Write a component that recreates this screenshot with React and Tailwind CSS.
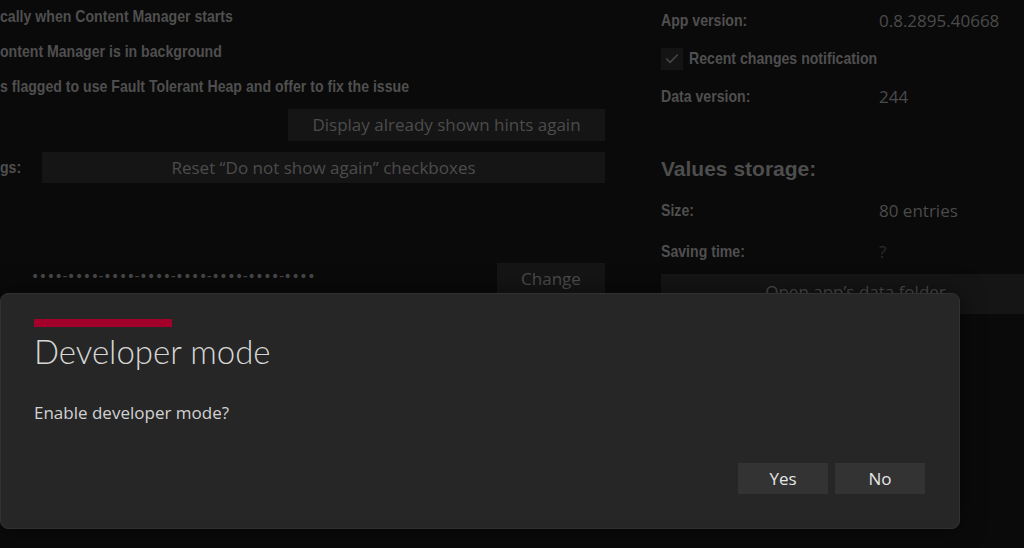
import { Check } from "lucide-react";

const regular = "font-['Open_Sans',sans-serif]";

// Bold condensed label text; no narrow face is installed, so squeeze Liberation Sans
function Label({ children, className = "" }) {
  return (
    <div className={`h-[20px] whitespace-nowrap ${className}`}>
      <span className="block w-max origin-left scale-x-[0.83] font-['Liberation_Sans',sans-serif] text-[17px] font-bold leading-[20px] text-[#4f4f4f]">
        {children}
      </span>
    </div>
  );
}

function DimButton({ children, className = "" }) {
  return (
    <div
      className={`${regular} flex items-center justify-center bg-[#151515] text-[17px] text-[#4c4c4c] whitespace-nowrap ${className}`}
    >
      {children}
    </div>
  );
}

function InfoRow({ label, value, className = "", valueClass = "text-[#4a4a4a]" }) {
  return (
    <div className={`flex h-[20px] items-center ${className}`}>
      <Label className="w-[218px] shrink-0">{label}</Label>
      <div className={`${regular} text-[17px] leading-[20px] ${valueClass}`}>{value}</div>
    </div>
  );
}

function SettingsBackdrop() {
  return (
    <div className="flex">
      <div className="flex w-[605px] shrink-0 flex-col pt-[7px]">
        <Label className="h-[35px]">cally when Content Manager starts</Label>
        <Label className="h-[35px]">ontent Manager is in background</Label>
        <Label className="h-[32px]">s flagged to use Fault Tolerant Heap and offer to fix the issue</Label>
        <DimButton className="ml-[288px] h-[32px]">Display already shown hints again</DimButton>
        <div className="mt-[11px] flex h-[31px] items-center">
          <Label className="w-[42px] shrink-0">gs:</Label>
          <DimButton className="h-full flex-1">Reset “Do not show again” checkboxes</DimButton>
        </div>
        <div className="mt-[80px] flex h-[32px]">
          <div className="flex-1 pl-[31px] pt-[3px] font-['DejaVu_Sans',sans-serif] text-[14px] leading-[20px] tracking-[-0.4px] text-[#474747]">
            ••••-••••-••••-••••-••••-••••-••••-••••
          </div>
          <DimButton className="h-full w-[108px] shrink-0">Change</DimButton>
        </div>
      </div>

      <div className="ml-[56px] flex w-[389px] shrink-0 flex-col pt-[11px]">
        <InfoRow label="App version:" value="0.8.2895.40668" />
        <div className="mt-[17px] flex h-[22px] items-center gap-[6px]">
          <div className="flex h-[22px] w-[22px] shrink-0 items-center justify-center bg-[#141414]">
            <Check size={16} strokeWidth={2.5} className="text-[#454545]" />
          </div>
          <Label>Recent changes notification</Label>
        </div>
        <InfoRow label="Data version:" value="244" className="mt-[17px]" />
        <div className="mt-[48px] h-[28px] font-['Liberation_Sans',sans-serif] text-[21px] font-bold leading-[28px] text-[#4d4d4d]">
          Values storage:
        </div>
        <InfoRow label="Size:" value="80 entries" className="mt-[18px]" />
        <InfoRow label="Saving time:" value="?" className="mt-[21px]" valueClass="text-[#2c2c2c]" />
        <DimButton className="mt-[12px] h-[40px] items-start pt-[5px]">Open app’s data folder</DimButton>
      </div>
    </div>
  );
}

function ConfirmDialog() {
  return (
    <div className="absolute left-0 top-[293px] flex h-[236px] w-[960px] flex-col rounded-lg border border-[#313131] bg-[#262626] pl-[33px] pr-[34px] pb-[34px] pt-[25px] shadow-[0_0_24px_rgba(0,0,0,0.5)]">
      <div className="h-[8px] w-[138px] bg-[#a3002b]" />
      <div className="mt-[4px] font-['Lato',sans-serif] text-[33px] font-light leading-[40px] text-[#d6d6d6]">
        Developer mode
      </div>
      <div className={`${regular} mt-[30px] text-[17px] leading-[24px] text-[#d2d2d2]`}>
        Enable developer mode?
      </div>
      <div className="mt-auto flex justify-end gap-[7px]">
        <button className={`${regular} h-[31px] w-[90px] bg-[#333333] text-[17px] text-[#e6e6e6]`}>Yes</button>
        <button className={`${regular} h-[31px] w-[90px] bg-[#333333] text-[17px] text-[#e6e6e6]`}>No</button>
      </div>
    </div>
  );
}

export default function App() {
  return (
    <div className="relative h-[548px] w-[1024px] overflow-hidden bg-[#0a0a0a]">
      <SettingsBackdrop />
      <ConfirmDialog />
    </div>
  );
}
